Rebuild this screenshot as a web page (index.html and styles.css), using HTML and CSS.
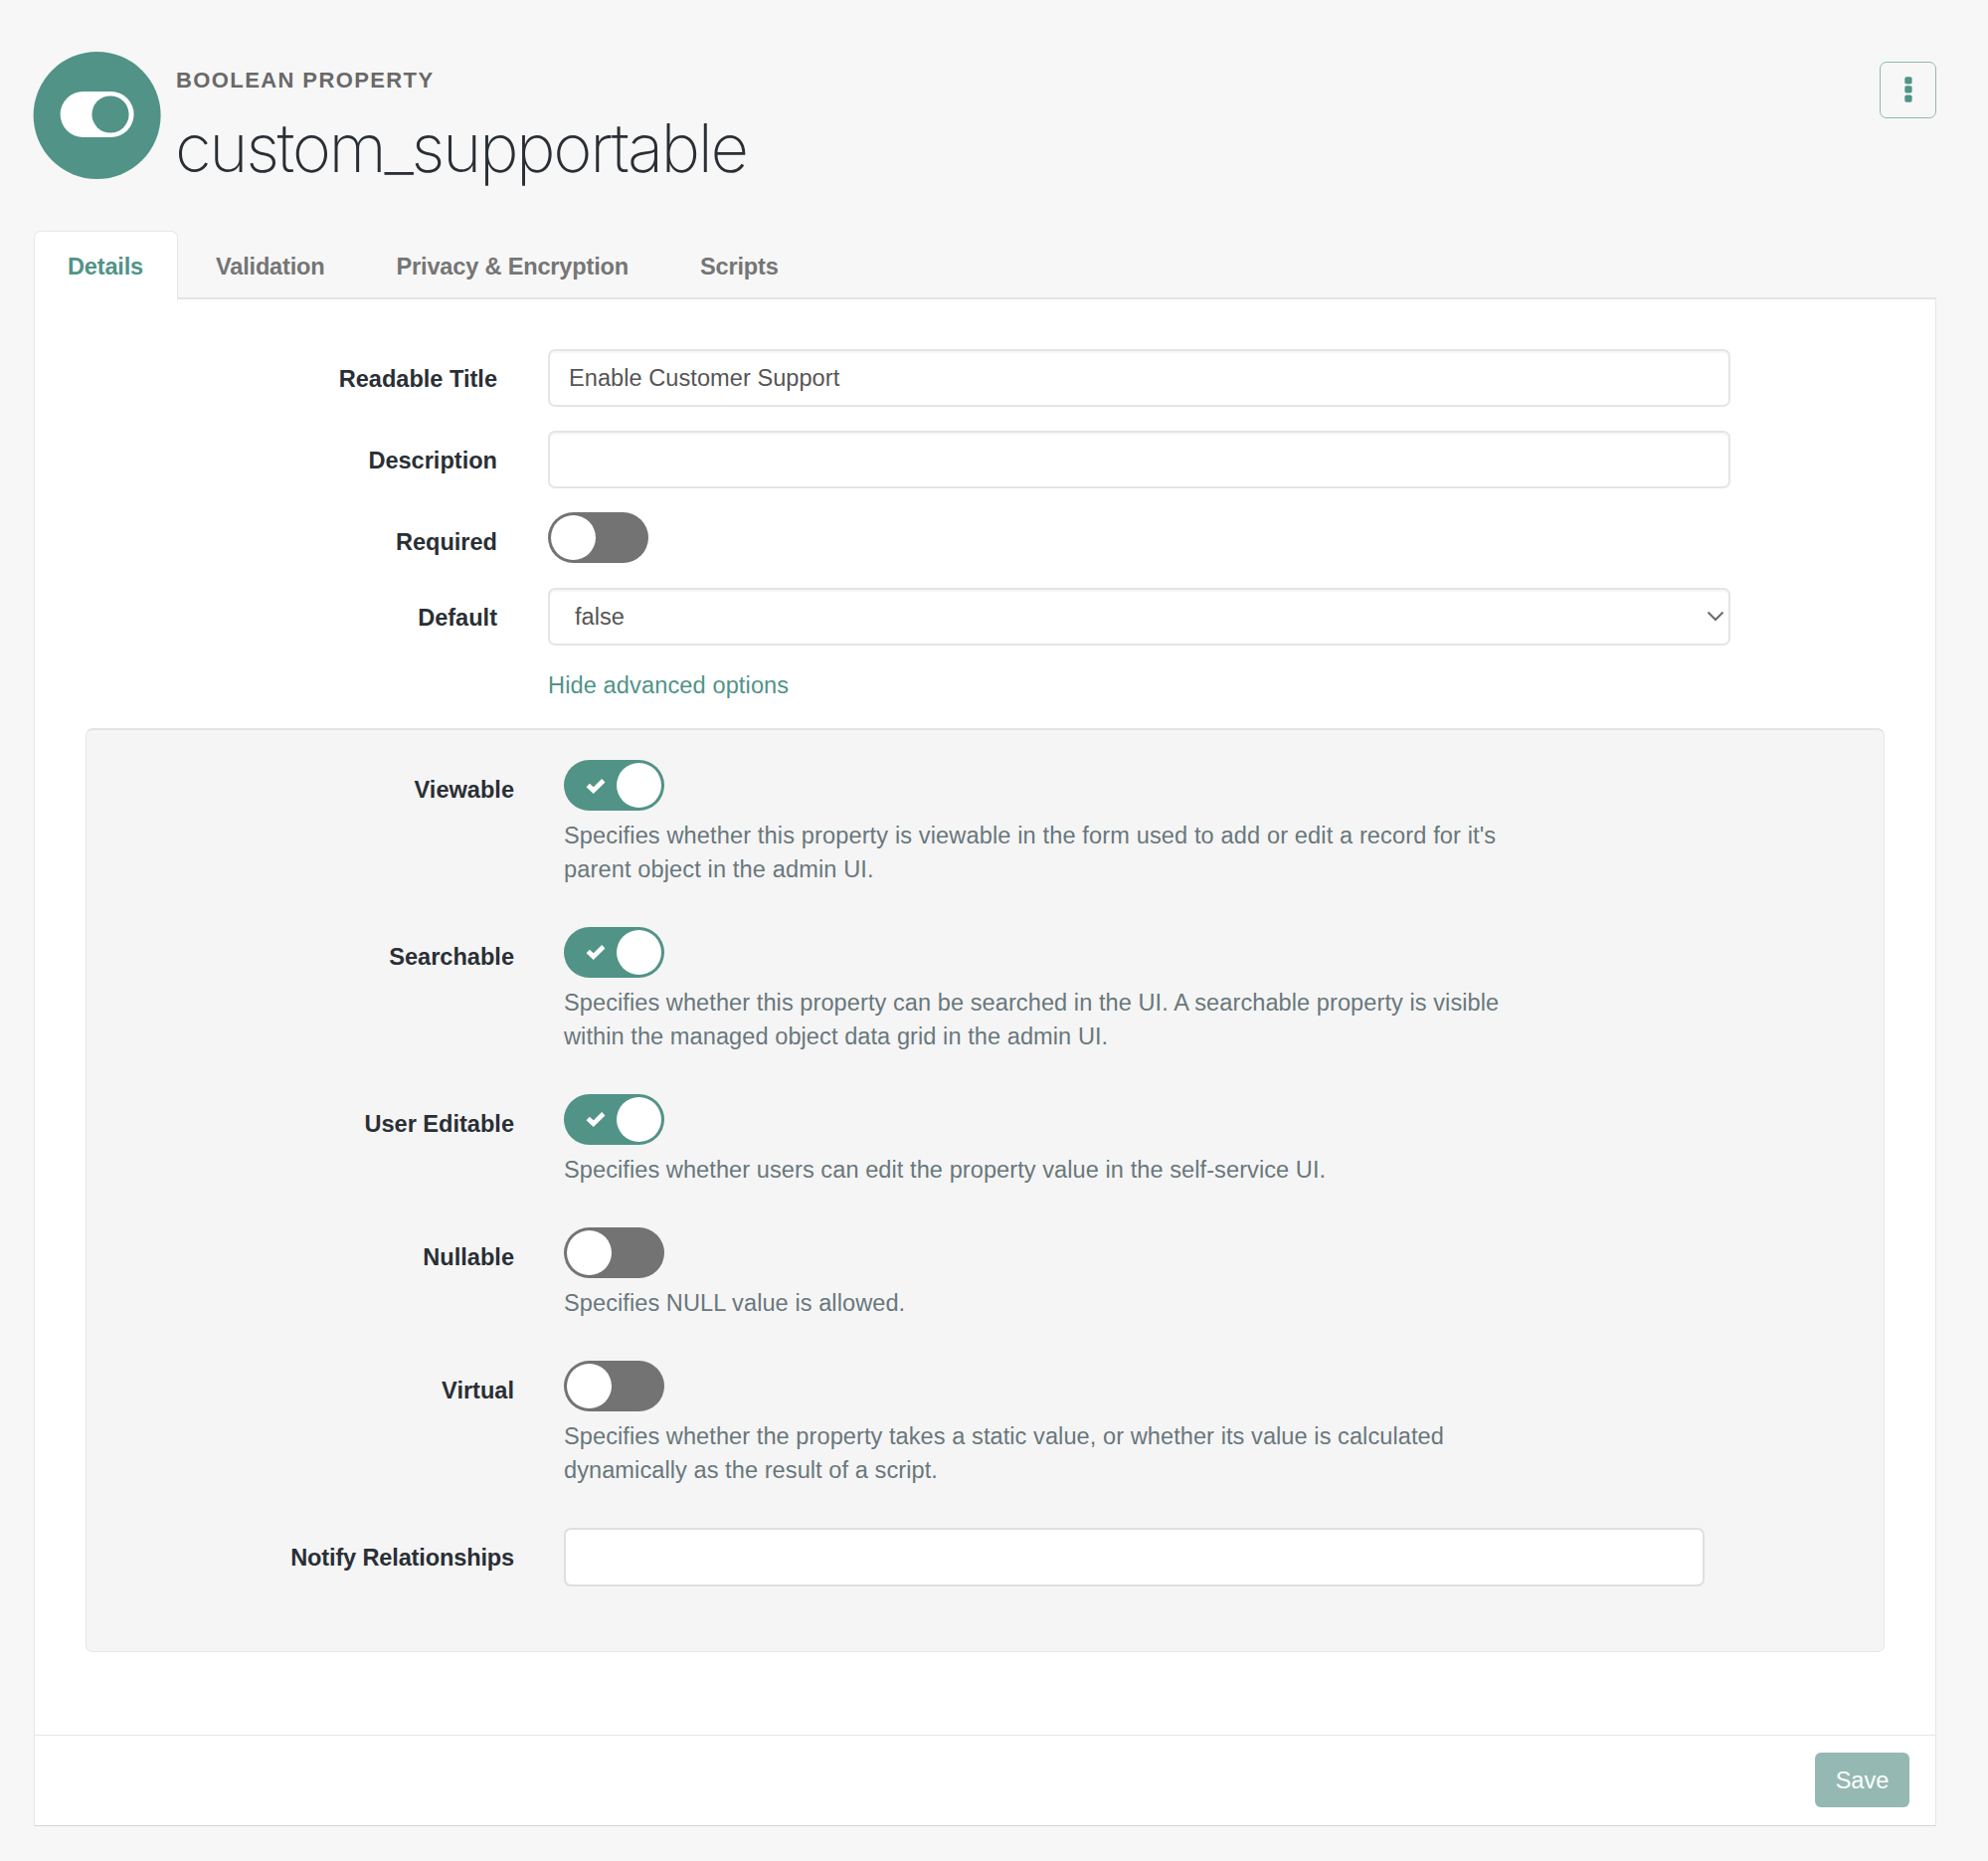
FILE: index.html
```html
<!DOCTYPE html>
<html lang="en">
<head>
<meta charset="utf-8">
<title>custom_supportable</title>
<link rel="stylesheet" href="styles.css">
</head>
<body>
<header class="page-header">
  <svg class="avatar" viewBox="0 0 128 128" aria-hidden="true">
    <circle cx="63.6" cy="64" r="64" fill="#519387"/>
    <rect x="26.6" y="40" width="74" height="46" rx="23" fill="#fff"/>
    <circle cx="77" cy="63" r="18.6" fill="#519387"/>
  </svg>
  <div class="heading">
    <div class="kind">BOOLEAN PROPERTY</div>
    <h1 class="name">custom_supportable</h1>
  </div>
  <button class="menu-button" aria-label="More">
    <svg width="8" height="26" viewBox="0 0 8 26">
      <rect x="0.3" y="0.2" width="7.3" height="7.3" rx="1.8"/>
      <rect x="0.3" y="9.3" width="7.3" height="7.3" rx="1.8"/>
      <rect x="0.3" y="18.4" width="7.3" height="7.3" rx="1.8"/>
    </svg>
  </button>
</header>

<nav class="tabs">
  <a class="tab tab-active">Details</a>
  <a class="tab">Validation</a>
  <a class="tab">Privacy &amp; Encryption</a>
  <a class="tab">Scripts</a>
</nav>

<main class="panel">
  <div class="form">
    <div class="row">
      <label class="label">Readable Title</label>
      <div class="input">Enable Customer Support</div>
    </div>
    <div class="row">
      <label class="label">Description</label>
      <div class="input"></div>
    </div>
    <div class="row">
      <label class="label">Required</label>
      <div class="toggle"><span class="knob"></span></div>
    </div>
    <div class="row">
      <label class="label">Default</label>
      <div class="input select"><span>false</span>
        <svg class="chevron" width="18" height="12" viewBox="0 0 18 12"><path d="M1.5 1.5 9 9l7.5-7.5"/></svg>
      </div>
    </div>
    <a class="advanced-link">Hide advanced options</a>
  </div>

  <section class="well">
    <div class="row">
      <label class="label">Viewable</label>
      <div class="field">
        <div class="toggle toggle-on"><svg class="check" viewBox="0 0 20 16"><path d="M2.2 7.4 7.7 12.6 17.8 2.8"/></svg><span class="knob"></span></div>
        <p class="help help-wide">Specifies whether this property is viewable in the form used to add or edit a record for it's<br>parent object in the admin UI.</p>
      </div>
    </div>
    <div class="row">
      <label class="label">Searchable</label>
      <div class="field">
        <div class="toggle toggle-on"><svg class="check" viewBox="0 0 20 16"><path d="M2.2 7.4 7.7 12.6 17.8 2.8"/></svg><span class="knob"></span></div>
        <p class="help">Specifies whether this property can be searched in the UI. A searchable property is visible<br>within the managed object data grid in the admin UI.</p>
      </div>
    </div>
    <div class="row">
      <label class="label">User Editable</label>
      <div class="field">
        <div class="toggle toggle-on"><svg class="check" viewBox="0 0 20 16"><path d="M2.2 7.4 7.7 12.6 17.8 2.8"/></svg><span class="knob"></span></div>
        <p class="help">Specifies whether users can edit the property value in the self-service UI.</p>
      </div>
    </div>
    <div class="row">
      <label class="label">Nullable</label>
      <div class="field">
        <div class="toggle"><span class="knob"></span></div>
        <p class="help">Specifies NULL value is allowed.</p>
      </div>
    </div>
    <div class="row">
      <label class="label">Virtual</label>
      <div class="field">
        <div class="toggle"><span class="knob"></span></div>
        <p class="help">Specifies whether the property takes a static value, or whether its value is calculated<br>dynamically as the result of a script.</p>
      </div>
    </div>
    <div class="row">
      <label class="label label-tight">Notify Relationships</label>
      <div class="input notify"></div>
    </div>
  </section>

  <footer class="panel-footer">
    <button class="save">Save</button>
  </footer>
</main>
</body>
</html>
```
FILE: styles.css
```css
* { box-sizing: border-box; }

body {
  margin: 0;
  padding: 52px 52px 0 34px;
  height: 1871px;
  background: #f7f7f7;
  color: #2a2f35;
  font: 23.57px/33.67px "Liberation Sans", Arial, sans-serif;
}

button { font: inherit; }

.page-header {
  display: flex;
  align-items: flex-start;
  height: 180px;
}
.avatar { width: 128px; height: 128px; overflow: visible; }
.heading { flex: 1; padding: 12px 0 0 15px; }
.kind {
  color: #696969;
  font-size: 22px;
  font-weight: 700;
  line-height: 34px;
  letter-spacing: 1.4px;
  white-space: nowrap;
}
.name {
  margin: 11px 0 0 -1px;
  font: 200 67px/80px Inter, sans-serif;
  letter-spacing: -2.4px;
}
.menu-button {
  display: flex;
  align-items: center;
  justify-content: center;
  width: 57px;
  height: 57px;
  margin-top: 10px;
  padding: 0 0 1px 1px;
  border: 1.5px solid #8fb9b1;
  border-radius: 7px;
  background: none;
  fill: #519387;
}

.tabs { display: flex; height: 67px; }
.tab {
  padding: 20px 36px 0;
  color: #757575;
  font-weight: 700;
  letter-spacing: -0.18px;
  white-space: nowrap;
}
.tab-active {
  height: 70px;
  margin-right: 2px;
  padding: 19px 34px 0 33px;
  border: 1px solid #e6e6e6;
  border-bottom: 0;
  border-radius: 7px 7px 0 0;
  background: #fff;
  color: #519387;
  z-index: 1;
}

.panel {
  display: flex;
  flex-direction: column;
  height: 1537px;
  border: 1px solid #e7e7e7;
  border-top: 2px solid #e4e4e4;
  border-bottom: 1px solid #d4d4d4;
  background: #fff;
}
.form { height: 431px; padding: 50px 206px 0 0; }
.row {
  display: grid;
  grid-template-columns: 465px 1fr;
  column-gap: 51px;
  margin-bottom: 24px;
}
.form .toggle { margin-bottom: 1px; }
.label {
  padding-top: 14px;
  font-weight: 700;
  text-align: right;
  white-space: nowrap;
}
.label-tight { letter-spacing: -0.15px; }
.input {
  height: 58px;
  padding: 11px 19px;
  border: 2px solid #e5e5e5;
  border-radius: 7px;
  background: #fff;
  box-shadow: inset 0 2px 2px rgba(0, 0, 0, 0.04);
  color: #555;
  letter-spacing: 0.05px;
}
.select {
  display: flex;
  justify-content: space-between;
  padding: 11px 4px 0 25px;
}
.chevron {
  margin-top: 10px;
  fill: none;
  stroke: #6b6b6b;
  stroke-width: 2;
}
.advanced-link {
  display: block;
  margin: 1px 0 0 516px;
  color: #519387;
  letter-spacing: 0.12px;
}

.toggle {
  display: flex;
  align-items: center;
  width: 101px;
  height: 51px;
  padding: 3px;
  border-radius: 26px;
  background: #737373;
}
.knob {
  width: 45px;
  height: 45px;
  border-radius: 50%;
  background: #fff;
}
.toggle-on { background: #519387; }
.toggle-on .knob { margin-left: auto; }
.check {
  width: 20px;
  height: 16px;
  margin-left: 18.5px;
  fill: none;
  stroke: #fff;
  stroke-width: 4.8;
}

.well {
  height: 929px;
  margin: 0 51px 0 51px;
  padding: 30px 180px 0 0;
  border: 1px solid #e7e7e7;
  border-top: 2px solid #e4e4e4;
  border-radius: 7px;
  background: #f5f5f5;
}
.well .row {
  grid-template-columns: 430px 1fr;
  column-gap: 50px;
  margin-bottom: 40.5px;
}
.help {
  margin: 9px 0 0;
  color: #69777c;
  letter-spacing: 0.07px;
  white-space: nowrap;
}
.help-wide { letter-spacing: 0.13px; }
.notify { height: 59px; border-color: #dfdfdf; box-shadow: none; }

.panel-footer {
  display: flex;
  justify-content: flex-end;
  flex: 1;
  margin-top: 83px;
  padding: 17px 26px 0 0;
  border-top: 1px solid #e6e6e6;
}
.save {
  width: 95px;
  height: 55px;
  padding: 2px 0 0;
  border: 0;
  border-radius: 6px;
  background: #95b9b2;
  color: #fff;
}
```
